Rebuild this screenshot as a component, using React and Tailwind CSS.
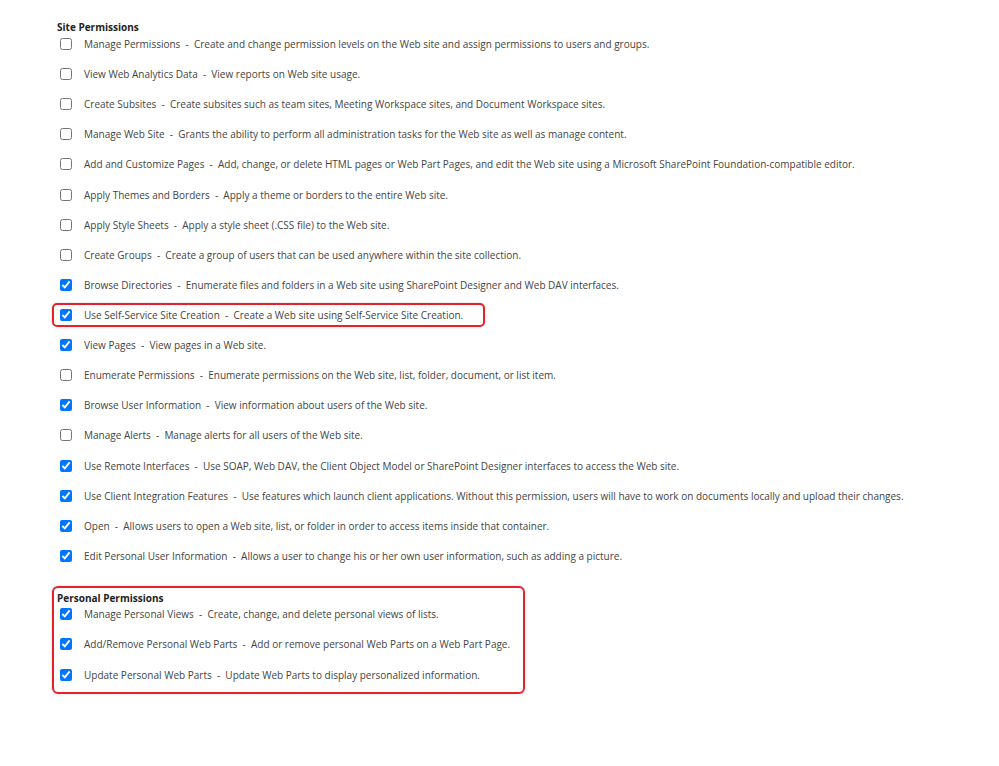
import { useState } from "react";

const sitePermissions = [
  { id: "managePerms", name: "Manage Permissions", desc: "Create and change permission levels on the Web site and assign permissions to users and groups.", checked: false },
  { id: "viewAnalytics", name: "View Web Analytics Data", desc: "View reports on Web site usage.", checked: false },
  { id: "createSubsites", name: "Create Subsites", desc: "Create subsites such as team sites, Meeting Workspace sites, and Document Workspace sites.", checked: false },
  { id: "manageWeb", name: "Manage Web Site", desc: "Grants the ability to perform all administration tasks for the Web site as well as manage content.", checked: false },
  { id: "customizePages", name: "Add and Customize Pages", desc: "Add, change, or delete HTML pages or Web Part Pages, and edit the Web site using a Microsoft SharePoint Foundation-compatible editor.", checked: false },
  { id: "themes", name: "Apply Themes and Borders", desc: "Apply a theme or borders to the entire Web site.", checked: false },
  { id: "styleSheets", name: "Apply Style Sheets", desc: "Apply a style sheet (.CSS file) to the Web site.", checked: false },
  { id: "createGroups", name: "Create Groups", desc: "Create a group of users that can be used anywhere within the site collection.", checked: false },
  { id: "browseDirs", name: "Browse Directories", desc: "Enumerate files and folders in a Web site using SharePoint Designer and Web DAV interfaces.", checked: true },
  { id: "selfService", name: "Use Self-Service Site Creation", desc: "Create a Web site using Self-Service Site Creation.", checked: true, highlight: true },
  { id: "viewPages", name: "View Pages", desc: "View pages in a Web site.", checked: true },
  { id: "enumPerms", name: "Enumerate Permissions", desc: "Enumerate permissions on the Web site, list, folder, document, or list item.", checked: false },
  { id: "browseUsers", name: "Browse User Information", desc: "View information about users of the Web site.", checked: true },
  { id: "manageAlerts", name: "Manage Alerts", desc: "Manage alerts for all users of the Web site.", checked: false },
  { id: "remoteInterfaces", name: "Use Remote Interfaces", desc: "Use SOAP, Web DAV, the Client Object Model or SharePoint Designer interfaces to access the Web site.", checked: true },
  { id: "clientIntegration", name: "Use Client Integration Features", desc: "Use features which launch client applications. Without this permission, users will have to work on documents locally and upload their changes.", checked: true },
  { id: "open", name: "Open", desc: "Allows users to open a Web site, list, or folder in order to access items inside that container.", checked: true },
  { id: "editPersonalInfo", name: "Edit Personal User Information", desc: "Allows a user to change his or her own user information, such as adding a picture.", checked: true },
];

const personalPermissions = [
  { id: "personalViews", name: "Manage Personal Views", desc: "Create, change, and delete personal views of lists.", checked: true },
  { id: "personalParts", name: "Add/Remove Personal Web Parts", desc: "Add or remove personal Web Parts on a Web Part Page.", checked: true },
  { id: "updateParts", name: "Update Personal Web Parts", desc: "Update Web Parts to display personalized information.", checked: true },
];

const SEP = "\u00a0\u00a0-\u00a0\u00a0";

const PermissionRow = ({ perm, checked, onToggle }) => (
  <label className="flex items-center h-[16px] cursor-pointer">
    <input
      type="checkbox"
      checked={checked}
      onChange={() => onToggle(perm.id)}
      className="w-[12px] h-[12px] m-0 ml-[3px] shrink-0"
    />
    <span className="ml-[12px] whitespace-nowrap text-[#444]">
      {perm.name}{SEP}{perm.desc}
    </span>
  </label>
);

export default function App() {
  const [state, setState] = useState(() => {
    const s = {};
    [...sitePermissions, ...personalPermissions].forEach(p => { s[p.id] = p.checked; });
    return s;
  });

  const toggle = (id) => setState(prev => ({ ...prev, [id]: !prev[id] }));

  return (
    <div className="min-h-[766px] bg-white pl-[57px] pt-[19px] text-[10px] leading-[16px] font-['Open_Sans','Noto_Sans',sans-serif]">
      {/* Site Permissions */}
      <h3 className="font-bold text-[#222] text-[10px] leading-[16px] mb-[1px]">Site Permissions</h3>
      <div className="flex flex-col">
        {sitePermissions.map(p =>
          p.highlight ? (
            <div
              key={p.id}
              className="w-fit -ml-[5px] pl-[3px] pr-[20px] -mt-[4px] mb-[10.12px] py-[2px] border-2 border-[#e5222b] rounded-[5px] shadow-[0_0_3px_rgba(0,0,0,0.15)]"
            >
              <PermissionRow perm={p} checked={state[p.id]} onToggle={toggle} />
            </div>
          ) : (
            <div key={p.id} className="mb-[14.12px]">
              <PermissionRow perm={p} checked={state[p.id]} onToggle={toggle} />
            </div>
          )
        )}
      </div>

      {/* Personal Permissions */}
      <div className="w-[473px] -ml-[5px] mt-[8px] pl-[3px] pt-[2px] pb-[9px] border-2 border-[#e5222b] rounded-[6px] shadow-[0_0_3px_rgba(0,0,0,0.15)]">
        <h3 className="font-bold text-[#222] text-[10px] leading-[16px]">Personal Permissions</h3>
        <div className="flex flex-col">
          {personalPermissions.map((p, i) => (
            <div key={p.id} className={i < personalPermissions.length - 1 ? "mb-[14.4px]" : ""}>
              <PermissionRow perm={p} checked={state[p.id]} onToggle={toggle} />
            </div>
          ))}
        </div>
      </div>
    </div>
  );
}
